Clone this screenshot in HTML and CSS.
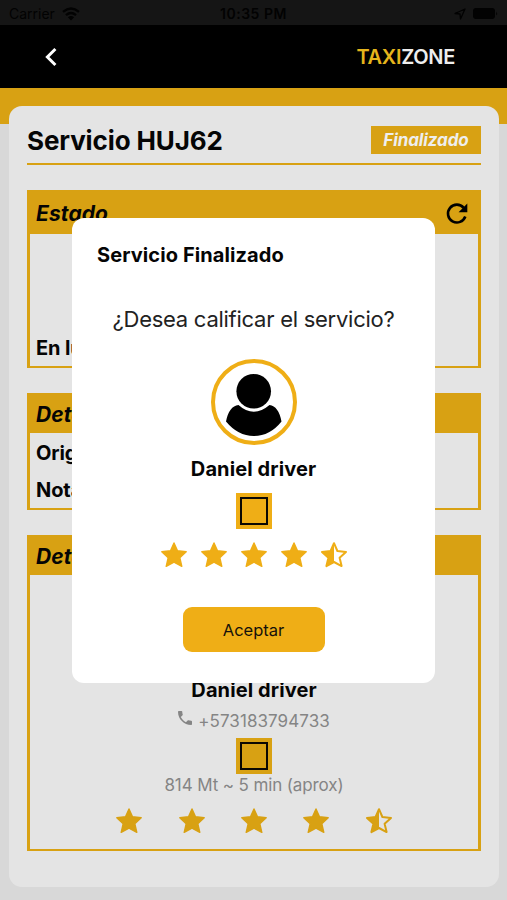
FILE: index.html
```html
<!DOCTYPE html>
<html lang="es">
<head>
<meta charset="utf-8">
<title>Taxizone</title>
<link rel="stylesheet" href="styles.css">
</head>
<body>
<svg class="defs" aria-hidden="true">
  <symbol id="star" viewBox="0 0 28 28"><path d="M14 2 L17.5 9.8 L26.2 10.7 L19.8 16.7 L21.8 25.3 L14 21.2 L6.2 25.3 L8.2 16.7 L1.8 10.7 L10.5 9.8 Z" fill="currentColor" stroke="currentColor" stroke-width="1.4" stroke-linejoin="round"/></symbol>
  <symbol id="star-half" viewBox="0 0 28 28"><path d="M14 2.2 L17.4 10 L26 10.9 L19.6 16.7 L21.6 25.1 L14 21 L6.4 25.1 L8.4 16.7 L2 10.9 L10.6 10 Z" fill="none" stroke="currentColor" stroke-width="2" stroke-linejoin="round"/><path d="M14 2 V21.2 L6.2 25.3 L8.2 16.7 L1.8 10.7 L10.5 9.8 Z" fill="currentColor"/></symbol>
</svg>
<div class="phone">
  <div class="status">
    <div class="carrier"><span>Carrier</span>
      <svg width="18" height="14" viewBox="0 0 18 14" fill="none" stroke="currentColor" stroke-width="2.4"><path d="M1 4.8 Q9 -2 17 4.8M4 8.2 Q9 4 14 8.2"/><path d="M9 13.5 L5.9 10.2 Q9 7.8 12.1 10.2Z" fill="currentColor" stroke="none"/></svg>
    </div>
    <span class="time">10:35 PM</span>
    <div class="indicators">
      <svg width="12" height="12" viewBox="0 0 12 12" fill="none" stroke="currentColor" stroke-width="1.3" stroke-linejoin="round"><path d="M1 5.5 L11 1 L6.5 11 L6 6 Z"/></svg>
      <svg width="25" height="11" viewBox="0 0 25 11"><rect width="22" height="11" rx="3" fill="currentColor"/><path d="M23.2 3.5 Q25 5.5 23.2 7.5Z" fill="currentColor"/></svg>
    </div>
  </div>
  <header class="topbar">
    <svg width="12" height="20" viewBox="0 0 12 20" fill="none" stroke="#fff" stroke-width="3"><path d="M10.4 2 L2.4 10 L10.4 18"/></svg>
    <div class="brand"><span class="taxi">TAXI</span><span>ZONE</span></div>
  </header>
  <main class="content">
    <div class="sheet">
      <div class="heading"><h1>Servicio HUJ62</h1><span class="tag">Finalizado</span></div>
      <section class="panel state">
        <div class="panel-head"><h2>Estado</h2>
          <svg width="22" height="22" viewBox="0 0 22 22"><path d="M17.7 4.8 A8.9 8.9 0 1 0 19.3 13.5" fill="none" stroke="#000" stroke-width="2.6"/><path d="M21.3 .5 V9.2 H12.6 Z"/></svg>
        </div>
        <p class="row">En lugar</p>
      </section>
      <section class="panel details">
        <div class="panel-head"><h2>Detalle</h2></div>
        <div class="rows">
          <p class="row">Origen</p>
          <p class="row">Nota</p>
        </div>
      </section>
      <section class="panel driver">
        <div class="panel-head"><h2>Detalle</h2></div>
        <div class="driver-info">
          <strong class="name">Daniel driver</strong>
          <div class="phone-line"><svg width="14" height="14" viewBox="3 3 18 18" fill="currentColor"><path d="M6.62 10.79c1.44 2.83 3.76 5.14 6.59 6.59l2.2-2.2c.27-.27.67-.36 1.02-.24 1.12.37 2.33.57 3.57.57.55 0 1 .45 1 1V20c0 .55-.45 1-1 1-9.39 0-17-7.61-17-17 0-.55.45-1 1-1h3.5c.55 0 1 .45 1 1 0 1.25.2 2.45.57 3.57.11.35.03.74-.25 1.02l-2.2 2.2z"/></svg><span>+573183794733</span></div>
          <div class="plate"></div>
          <p class="distance">814 Mt ~ 5 min (aprox)</p>
          <div class="stars wide"><svg><use href="#star"/></svg><svg><use href="#star"/></svg><svg><use href="#star"/></svg><svg><use href="#star"/></svg><svg><use href="#star-half"/></svg></div>
        </div>
      </section>
    </div>
  </main>
  <div class="overlay">
    <div class="dialog">
      <h3>Servicio Finalizado</h3>
      <p class="question">¿Desea calificar el servicio?</p>
      <svg class="avatar" width="86" height="86" viewBox="0 0 86 86"><circle cx="43" cy="43" r="41" fill="#fff" stroke="#efae16" stroke-width="4"/><circle cx="42.7" cy="32.3" r="17.3"/><path d="M27.500 46 Q42.500 59.500 58.500 46 Q67.500 47 70.500 62.500 Q59 77 42.700 77 Q27 77 15 62.500 Q18 47 27.500 46Z"/></svg>
      <strong class="name">Daniel driver</strong>
      <div class="plate"></div>
      <div class="stars"><svg><use href="#star"/></svg><svg><use href="#star"/></svg><svg><use href="#star"/></svg><svg><use href="#star"/></svg><svg><use href="#star-half"/></svg></div>
      <button class="accept">Aceptar</button>
    </div>
  </div>
</div>
</body>
</html>
```
FILE: styles.css
```css
* { box-sizing: border-box; margin: 0; padding: 0; }
body { font-family: Inter, "Liberation Sans", sans-serif; color: #050505; background: #d8d8d8; overflow: hidden; }
svg { display: block; flex: none; }
.defs { position: absolute; width: 0; height: 0; }
.phone { position: relative; width: 507px; height: 900px; --gold: #d8a113; }
.status { height: 25px; padding: 2px 9px 0; background: #151515; color: #020202; display: grid; grid-template-columns: 1fr auto 1fr; align-items: center; font-size: 14px; }
.carrier { display: flex; align-items: center; gap: 7px; }
.time { font-weight: 600; font-size: 14px; letter-spacing: .5px; }
.indicators { display: flex; align-items: center; justify-content: flex-end; gap: 7px; }
.topbar { height: 63px; padding: 0 52px 0 45px; background: #000; display: flex; align-items: center; justify-content: space-between; }
.brand { font-size: 20px; font-weight: 600; color: #eee; letter-spacing: -.3px; }
.taxi { color: #e5b51c; }
.content { height: 812px; padding: 18px 8px 13px 9px; background: linear-gradient(var(--gold) 36px, #d8d8d8 36px); }
.sheet { height: 781px; padding: 17px 18px 0; border-radius: 13px; background: #e4e4e4; }
.heading { height: 42px; display: flex; justify-content: space-between; align-items: flex-start; border-bottom: 2px solid var(--gold); }
h1 { font-size: 26px; line-height: 36px; font-weight: 700; letter-spacing: -.12px; white-space: nowrap; }
.tag { width: 110px; height: 28px; margin-top: 3px; background: var(--gold); color: #eee; font-size: 17px; line-height: 28px; font-style: italic; font-weight: 700; letter-spacing: -.1px; text-align: center; }
.panel { border: 3px solid var(--gold); border-bottom-width: 2px; margin-top: 25px; }
.state { height: 178px; }
.details { height: 117px; }
.driver { height: 316px; }
.panel-head { height: 37px; padding: 0 10px 0 6px; background: var(--gold); display: flex; align-items: center; justify-content: space-between; }
.state .panel-head { height: 41px; }
h2 { font-size: 21px; line-height: 37px; font-style: italic; font-weight: 700; letter-spacing: .1px; }
.row { padding-left: 6px; font-size: 20px; line-height: 37px; font-weight: 700; letter-spacing: -.1px; }
.rows { padding-top: 2px; }
.state .row { padding-top: 96px; }
.driver-info { padding-top: 101px; display: flex; flex-direction: column; align-items: center; }
.name { font-size: 20px; line-height: 28px; font-weight: 700; letter-spacing: .1px; white-space: nowrap; }
.phone-line { height: 24px; margin-top: 4px; display: flex; gap: 6px; font-size: 17px; line-height: 26px; color: #858585; letter-spacing: .08px; }
.phone-line svg { margin-top: 3px; }
.plate { width: 36px; height: 36px; margin-top: 6px; background: var(--gold); border: 4px solid var(--gold); outline: 2px solid #0b0802; outline-offset: -6px; }
.distance { font-size: 17px; line-height: 22px; color: #858585; letter-spacing: -.12px; white-space: nowrap; }
.stars { display: flex; gap: 12px; color: var(--gold); }
.stars svg { width: 28px; height: 28px; }
.wide { gap: 34.3px; margin-top: 11px; }
.overlay { position: absolute; inset: 0; padding-top: 218px; display: flex; justify-content: center; align-items: flex-start; }
.dialog { --gold: #efae16; width: 363px; height: 465px; background: #fff; border-radius: 12px; display: flex; flex-direction: column; align-items: center; }
h3 { align-self: flex-start; margin: 23px 0 0 25px; font-size: 20px; line-height: 28px; font-weight: 700; letter-spacing: .09px; white-space: nowrap; }
.question { margin-top: 35px; font-size: 22px; line-height: 30px; color: #222; letter-spacing: -.26px; white-space: nowrap; }
.avatar { margin-top: 25px; }
.dialog .name { margin-top: 10px; }
.dialog .plate { margin-top: 10px; }
.dialog .stars { margin-top: 12px; }
.accept { width: 142px; height: 45px; margin-top: 38px; border: 0; border-radius: 9px; background: var(--gold); color: #15110a; font: 400 16.5px Inter, "Liberation Sans", sans-serif; }
```
